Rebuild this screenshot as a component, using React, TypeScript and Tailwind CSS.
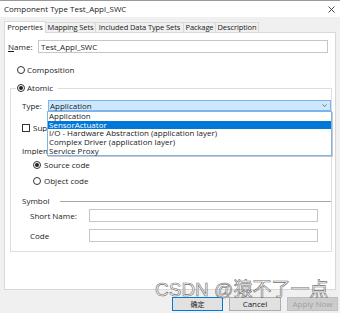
import React from 'react';

const Radio = ({ checked = false }: { checked?: boolean }) => (
  <span className="w-[8px] h-[8px] rounded-full border border-[#333333] bg-white flex items-center justify-center shrink-0">
    {checked && <span className="w-[4px] h-[4px] rounded-full bg-[#222222]"></span>}
  </span>
);

const tabs = [
  { label: 'Properties', w: 'w-[42px]', active: true },
  { label: 'Mapping Sets', w: 'w-[51px]', active: false },
  { label: 'Included Data Type Sets', w: 'w-[89px]', active: false },
  { label: 'Package', w: 'w-[33px]', active: false },
  { label: 'Description', w: 'w-[44px]', active: false },
];

const options = [
  'Application',
  'SensorActuator',
  'I/O - Hardware Abstraction (application layer)',
  'Complex Driver (application layer)',
  'Service Proxy',
];

const App = () => {
  return (
    <div className="w-[340px] h-[313px] bg-[#f0f0f0] flex flex-col relative overflow-hidden text-[8px] leading-none text-[#1a1a1a] font-['Open_Sans','Noto_Sans',sans-serif]">
      {/* Title bar */}
      <div className="h-[17px] bg-white border-t border-[#9a9a9a] flex items-center justify-between pl-[4px] pr-[5px] shrink-0">
        <span>Component Type Test_Appl_SWC</span>
        <svg width="7" height="7" viewBox="0 0 7 7" className="text-[#333333]">
          <path d="M0.5 0.5 L6.5 6.5 M6.5 0.5 L0.5 6.5" stroke="currentColor" strokeWidth="0.9" />
        </svg>
      </div>

      {/* Tabs */}
      <div className="h-[15px] flex items-end pl-[4px] shrink-0">
        {tabs.map((t) => (
          <div
            key={t.label}
            className={`${t.w} flex items-center justify-center whitespace-nowrap text-[7.5px] tracking-[-0.1px] border-t border-l border-r border-[#d9d9d9] -mr-[1px] ${
              t.active ? 'h-[12px] bg-white relative z-10 -mb-[1px]' : 'h-[10px] bg-[#f0f0f0]'
            }`}
          >
            {t.label}
          </div>
        ))}
      </div>

      {/* Panel */}
      <div className="ml-[4px] w-[332px] h-[258px] bg-white border border-[#d9d9d9] flex flex-col pt-[7px] pl-[3px] relative shrink-0">
        <div className="flex items-center h-[13px]">
          <span className="w-[30px]"><span className="underline">N</span>ame:</span>
          <div className="w-[290px] h-[13px] border border-[#c6c6c6] flex items-center pl-[2px]">Test_Appl_SWC</div>
        </div>

        <div className="flex items-center h-[10px] mt-[12px] ml-[9px] gap-[2px]">
          <Radio />
          <span>Composition</span>
        </div>

        <fieldset className="ml-[2px] w-[322px] border border-[#dedede] mt-[8px] pb-[9px] flex flex-col">
          <legend className="ml-[5px] pl-[1px] pr-[5px] h-[10px] flex items-center gap-[2px]">
            <Radio checked />
            <span>Atomic</span>
          </legend>

          <div className="flex items-center h-[11px] mt-[7px] ml-[11px]">
            <span className="w-[26px]">Type:</span>
            <div className="w-[283px] h-[11px] bg-[#cce8ff] border border-[#7eb4ea] flex items-center justify-between pl-[1px] pr-[3px]">
              <span>Application</span>
              <svg width="5" height="3" viewBox="0 0 5 3">
                <path d="M0.5 0.5 L2.5 2.5 L4.5 0.5" fill="none" stroke="#555555" strokeWidth="0.8" />
              </svg>
            </div>
          </div>

          <div className="flex items-center h-[10px] mt-[12px] ml-[11px] gap-[3px]">
            <span className="w-[8px] h-[8px] border border-[#333333] bg-white shrink-0"></span>
            <span className="w-[14px] overflow-hidden whitespace-nowrap">Supports multiple instantiation</span>
          </div>

          <div className="flex items-center h-[10px] mt-[13px] ml-[11px]">
            <span className="w-[25px] overflow-hidden whitespace-nowrap">Implementation</span>
          </div>

          <div className="flex items-center h-[10px] mt-[4px] ml-[22px] gap-[3px]">
            <Radio checked />
            <span>Source code</span>
          </div>

          <div className="flex items-center h-[10px] mt-[6px] ml-[22px] gap-[3px]">
            <Radio />
            <span>Object code</span>
          </div>

          <div className="flex items-center h-[10px] mt-[10px] ml-[11px]">
            <span className="w-[38px]">Symbol</span>
            <div className="flex-1 border-t border-[#a8a8a8]"></div>
          </div>

          <div className="flex items-center h-[13px] mt-[3px] ml-[19px]">
            <span className="w-[59px]">Short Name:</span>
            <div className="w-[229px] h-[13px] border border-[#c6c6c6]"></div>
          </div>

          <div className="flex items-center h-[13px] mt-[7px] ml-[19px]">
            <span className="w-[59px]">Code</span>
            <div className="w-[229px] h-[13px] border border-[#c6c6c6]"></div>
          </div>
        </fieldset>

        {/* Open dropdown list */}
        <div className="absolute left-[42px] top-[78px] w-[285px] h-[45px] bg-white border border-[#7eb4ea] shadow-[1px_1px_0_#c8c8c8] flex flex-col z-20">
          {options.map((o, i) => (
            <div
              key={o}
              className={`h-[9px] flex items-center pl-[1px] ${i === 1 ? 'bg-[#0078d7] text-white' : ''}`}
            >
              {o}
            </div>
          ))}
        </div>
      </div>

      {/* Buttons */}
      <div className="flex-1 flex justify-end items-start pt-[7px] pr-[2px] gap-[6px]">
        <div className="w-[51px] h-[14px] bg-[#e1e1e1] border border-[#0078d7] flex items-center justify-center font-['Noto_Sans_CJK_SC',sans-serif] text-[7px]">
          确定
        </div>
        <div className="w-[52px] h-[14px] bg-[#e1e1e1] border border-[#adadad] flex items-center justify-center">
          Cancel
        </div>
        <div className="w-[51px] h-[14px] bg-[#cccccc] border border-[#bfbfbf] text-[#a0a0a0] flex items-center justify-center">
          Apply Now
        </div>
      </div>

      {/* Watermark */}
      <div className="absolute left-[155px] top-[280px] text-[19px] leading-none text-white/60 [-webkit-text-stroke:0.6px_#6f6f6f] font-['Liberation_Sans','Noto_Sans_CJK_SC',sans-serif] z-30 whitespace-nowrap">
        CSDN @猿不了一点
      </div>
    </div>
  );
};

export default App;
